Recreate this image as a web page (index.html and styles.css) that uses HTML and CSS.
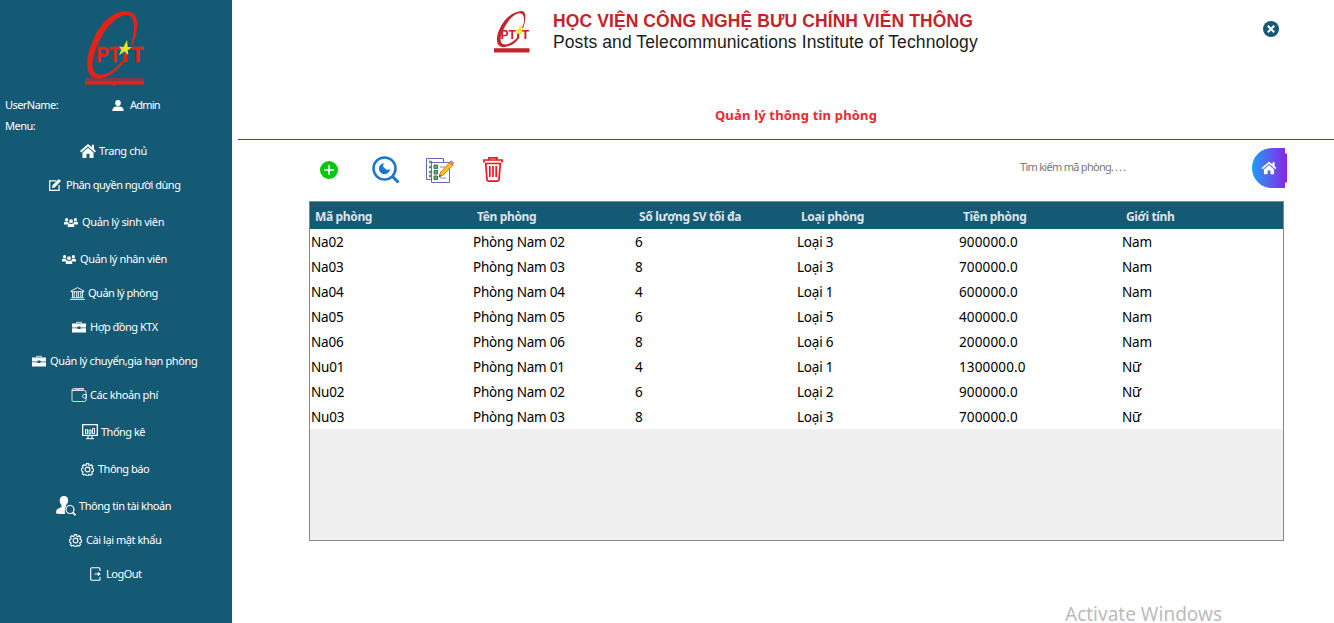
FILE: index.html
```html
<!DOCTYPE html>
<html lang="vi">
<head>
<meta charset="utf-8">
<title>Quản lý thông tin phòng</title>
<link rel="stylesheet" href="styles.css">
</head>
<body>
<svg class="defs" width="0" height="0">
  <defs>
    <symbol id="house" viewBox="0 0 16 14"><path d="M8 0 0 7l1.2 1.4L8 2.5l6.8 5.9L16 7l-2-1.8V.8h-2.200v2.500z"/><path d="M8 3.800 2.500 8.600V14h4V9.700h3V14h4V8.600z"/></symbol>
    <symbol id="edit" viewBox="0 0 12 12"><path d="M7.500 1.900H.7v9.400h9.400V6" fill="none" stroke="currentColor" stroke-width="1.200"/><path d="M3 9 3.600 6.300 9.800 0 12 2 5.700 8.400z"/></symbol>
    <symbol id="group" viewBox="0 0 14 9"><circle cx="2.600" cy="1.700" r="1.600"/><circle cx="11.400" cy="1.700" r="1.600"/><circle cx="7" cy="3.200" r="1.900"/><path d="M0 6.500V5q0-1.200 1.300-1.200H4q.2 1.400 1 2l-.8.700zM14 6.500V5q0-1.200-1.300-1.200H10q-.2 1.400-1 2l.8.700zM3.800 9V7.300q0-1.700 1.700-1.700L7 6.300l1.500-.7q1.700 0 1.700 1.700V9z"/></symbol>
    <symbol id="bank" viewBox="0 0 15 13"><path d="M1 4 7.500.6 14 4v.700H1zM2.500 5v5.500M4.200 5v5.500M6.700 5v5.500M8.400 5v5.500M10.800 5v5.500M12.500 5v5.500M1.500 10.700h12M0 12.400h15" fill="none" stroke="currentColor" stroke-width=".9"/></symbol>
    <symbol id="case" viewBox="0 0 14 12"><path d="M4.500 2.500V1.300h5v1.200" fill="none" stroke="currentColor" stroke-width=".8"/><path d="M0 2.400h14v4H8.500V5.600h-3v.8H0zM0 7.200h5.500V8h3v-.8H14V11.500H0z"/></symbol>
    <symbol id="wallet" viewBox="0 0 16 14"><path d="M1 2.500 12 .7v1.800M1 2.500h12.500q1.500 0 1.500 1.500v8q0 1.500-1.500 1.500h-11Q1 13.500 1 12V2q0-1.400 1.500-1.400H13M15.500 6.500H13q-1.500 0-1.500 1.700T13 10h2.500z" fill="none" stroke="currentColor" stroke-width=".8"/></symbol>
    <symbol id="chart" viewBox="0 0 16 16"><path d="M.7.700h14.600v10.600H.7z" fill="none" stroke="currentColor" stroke-width="1.300"/><path d="M6 11.500v3M10 11.500v3M4 14.700h8M3.500 5.500h2v4h-2zM7 6h2v3.500H7zM10.500 4.500h2v5h-2z" fill="none" stroke="currentColor"/></symbol>
    <symbol id="gear" viewBox="0 0 14 14"><path d="M5.800.7h2.400l.4 1.700 1 .4 1.500-.9 1.500 1.600-.8 1.500.4 1 1.300.5v2.100l-1.500.5-.4 1 .8 1.500-1.500 1.500-1.500-.8-1 .4-.4 1.200H5.900l-.5-1.300-1-.4-1.500.8-1.500-1.500.8-1.500-.4-1L.5 8.400V6.200L1.900 5.800l.4-1-.8-1.500L3 1.800l1.500.9 1-.4z" fill="none" stroke="currentColor" stroke-width="1.200"/><circle cx="7" cy="7" r="2.600" fill="none" stroke="currentColor" stroke-width="1.200"/></symbol>
    <symbol id="find" viewBox="0 0 20 20"><path d="M8 0c3 0 4.300 2 4.200 4.700Q12 7.500 10 9.300v1.400Q8 12.500 9.200 17.700q-4.500.9-9.200-.5 0-4 2.500-4.800l3-1.500V9.300Q3.700 7.500 3.700 4.700 3.700 0 8 0z"/><circle cx="14" cy="13.500" r="4" fill="none" stroke="currentColor" stroke-width="1.200"/><path d="m16.800 16.500 2.700 2.800" stroke="currentColor" stroke-width="1.800"/></symbol>
    <symbol id="exit" viewBox="0 0 11 14"><path d="M10 4V1.700q0-1-1-1H1.700q-1 0-1 1v10.600q0 1 1 1H9q1 0 1-1V10" fill="none" stroke="currentColor" stroke-width="1.100"/><path d="M4.500 6.500h3.300V4.700L10.700 7 7.800 9.300V7.500H4.500z"/></symbol>
    <symbol id="user" viewBox="0 0 12 11"><ellipse cx="6" cy="3" rx="2.800" ry="3"/><path d="M.3 11q0-4.200 4-4.500h3.400q4 .3 4 4.500z"/></symbol>
  </defs>
</svg>
<div class="app">
  <aside class="sidebar">
    <svg class="brand" viewBox="0 0 60 76">
      <path fill="#e2231a" fill-rule="evenodd" d="M41 0C28 0 16 12 9 27 1 44 0 59 6 65c7 6 22 1 33-14l-2.500-1C27 63 15 67 9.500 61 5 54 9 40 16 27 24 11 36 3 43 4c8 2 7 17 3 30l1.500.5C54 19 56 1 41 0z"/>
      <text x="11.300" y="51.200" textLength="12.500" lengthAdjust="spacingAndGlyphs" class="brand-letters">P</text>
      <text x="24" y="51.200" textLength="11.500" lengthAdjust="spacingAndGlyphs" class="brand-letters">T</text>
      <path fill="#e2231a" d="M38 42h4.500v9.200H38z"/>
      <text x="46.500" y="51.200" textLength="12" lengthAdjust="spacingAndGlyphs" class="brand-letters">T</text>
      <path fill="#e8e51a" d="m42 29 .8 7 4.500.3-4.600 3 .6 4.700-4-3.400L34 44.500l2.300-6-2.300-3 4.500.4z"/>
      <path fill="#e2231a" d="M0 67.500h59v1H0zM0 69.500h59v4H31l-2 1.800-2-1.800H0z"/>
    </svg>
    <div class="account">
      <span class="account-label">UserName:</span>
      <svg class="user-icon"><use href="#user"/></svg>
      <span class="account-name">Admin</span>
    </div>
    <div class="menu-label">Menu:</div>
    <nav class="menu">
      <a class="item home"><svg><use href="#house"/></svg><span>Trang chủ</span></a>
      <a class="item roles"><svg><use href="#edit"/></svg><span>Phân quyền người dùng</span></a>
      <a class="item spaced students"><svg><use href="#group"/></svg><span>Quản lý sinh viên</span></a>
      <a class="item spaced staff"><svg><use href="#group"/></svg><span>Quản lý nhân viên</span></a>
      <a class="item rooms"><svg><use href="#bank"/></svg><span>Quản lý phòng</span></a>
      <a class="item contract"><svg><use href="#case"/></svg><span>Hợp đồng KTX</span></a>
      <a class="item transfer"><svg><use href="#case"/></svg><span>Quản lý chuyển,gia hạn phòng</span></a>
      <a class="item fees"><svg><use href="#wallet"/></svg><span>Các khoản phí</span></a>
      <a class="item spaced stats"><svg><use href="#chart"/></svg><span>Thống kê</span></a>
      <a class="item spaced notices"><svg><use href="#gear"/></svg><span>Thông báo</span></a>
      <a class="item spaced profile"><svg><use href="#find"/></svg><span>Thông tin tài khoản</span></a>
      <a class="item password"><svg><use href="#gear"/></svg><span>Cài lại mật khẩu</span></a>
      <a class="item logout"><svg><use href="#exit"/></svg><span>LogOut</span></a>
    </nav>
  </aside>
  <main class="main">
    <header class="header">
      <svg class="mark" viewBox="0 0 36 42">
        <path fill="#c3242a" fill-rule="evenodd" d="M27 0C17 1 8 10 4 22 1 33 5 37 11 36c6-1 11-4 14-9l-1.500-.7C18 33 9 36 7 31 5 25 11 14 17 7c5-5 10-6 12-3 2 4 1 8-1 13l1 .3C32 9 33-.5 27 0zM0 37.300h35.500v4.200H0z"/>
        <text class="mark-letters" x="6.500" y="27.700" textLength="8" lengthAdjust="spacingAndGlyphs">P</text>
        <text class="mark-letters" x="14.500" y="27.700" textLength="7.500" lengthAdjust="spacingAndGlyphs">T</text>
        <path fill="#c3242a" d="M23 22h2.200v5.700H23z"/>
        <text class="mark-letters" x="27.500" y="27.700" textLength="7.800" lengthAdjust="spacingAndGlyphs">T</text>
        <path fill="#ffeb13" d="m26.500 14 .6 4 1.800.5-1.700 1.900.3 3.200-2.200-1.600-3.200 2.200 1.100-4.300-1.200-1.700 2.200.1z"/>
      </svg>
      <div class="names">
        <div class="name-vi">HỌC VIỆN CÔNG NGHỆ BƯU CHÍNH VIỄN THÔNG</div>
        <div class="name-en">Posts and Telecommunications Institute of Technology</div>
      </div>
      <svg class="close" viewBox="0 0 16 16"><circle cx="8" cy="8" r="8" fill="#155a75"/><path d="m4.800 4.800 6.400 6.400M11.200 4.800l-6.400 6.400" stroke="#fff" stroke-width="2"/></svg>
    </header>
    <h1 class="title">Quản lý thông tin phòng</h1>
    <div class="toolbar">
      <svg class="add" viewBox="0 0 18 18"><circle cx="9" cy="9" r="9" fill="#00c90d"/><path d="M9 4v10M4 9h10" stroke="#fff" stroke-width="1.700"/></svg>
      <svg class="view" viewBox="0 0 28 28" fill="none" stroke="#1976d2"><circle cx="12.500" cy="12.500" r="11" stroke-width="2.500"/><path d="m20.500 20.500 6 6" stroke-width="3"/><path d="M12.500 7a5.600 5.600 0 1 0 5.600 5.600 3 3 0 0 1-5-.2 3 3 0 0 1-.6-5.400z" fill="#1976d2" stroke="none"/></svg>
      <svg class="modify" viewBox="0 0 28 26">
        <path d="M.5.500h17v21H.5z" fill="#fff" stroke="#686aa8"/><path d="M3 4h3M3 9h3M3 14h3M3 18h3" stroke="#54966a" stroke-width="2.500"/>
        <path d="M5.500 4.500h18v20h-18z" fill="#fff" stroke="#686aa8"/><path d="M8 7h3.500v3.500H8zM8 12.500h3.500V16H8zM8 18h3.500v3.500H8z" fill="#69a96b" stroke="#397658"/><path d="M14 9h5M14 14h3M14 20h6" stroke="#8c8fb9"/>
        <path d="m13 19 1.500-4.500L24 4l3 3-9.500 10z" fill="#f5be22" stroke="#ad7a20" stroke-width=".8"/><path d="m23.500 4.500 1.800-1.800 2.400 2.500L26.500 7z" fill="#e5838a" stroke="#a45064" stroke-width=".6"/><path d="m13 19 .7-2.200 1.500 1.300z" fill="#333"/>
      </svg>
      <svg class="delete" viewBox="0 0 20 25" fill="none" stroke="#f6131d" stroke-width="1.700"><path d="M1 5.500V3h18v2.500M6 3V.9h8V3M2 6.500h16M2.700 6.500 4 22.500q.1 1.600 1.500 1.600h9q1.400 0 1.500-1.600L17.300 6.500M6.800 9v11M10 9v11M13.200 9v11"/></svg>
      <span class="search">Tìm kiếm mã phòng<span class="dots">....</span></span>
      <svg class="home-button" viewBox="0 0 35 40"><defs><linearGradient id="homeFill"><stop stop-color="#209cf4"/><stop offset="1" stop-color="#8b24e9"/></linearGradient></defs><path fill="url(#homeFill)" d="M20 0h13v5l2 1v28l-2 1v5H20A20 20 0 0 1 20 0z"/><svg x="9" y="13.500" width="16" height="13" viewBox="0 0 16 14" fill="#fff"><use href="#house"/></svg></svg>
    </div>
    <section class="grid">
      <div class="row head"><span>Mã phòng</span><span>Tên phòng</span><span>Số lượng SV tối đa</span><span>Loại phòng</span><span>Tiền phòng</span><span>Giới tính</span></div>
      <div class="row"><span>Na02</span><span>Phòng Nam 02</span><span>6</span><span>Loại 3</span><span class="price">900000.0</span><span>Nam</span></div>
      <div class="row"><span>Na03</span><span>Phòng Nam 03</span><span>8</span><span>Loại 3</span><span class="price">700000.0</span><span>Nam</span></div>
      <div class="row"><span>Na04</span><span>Phòng Nam 04</span><span>4</span><span>Loại 1</span><span class="price">600000.0</span><span>Nam</span></div>
      <div class="row"><span>Na05</span><span>Phòng Nam 05</span><span>6</span><span>Loại 5</span><span class="price">400000.0</span><span>Nam</span></div>
      <div class="row"><span>Na06</span><span>Phòng Nam 06</span><span>8</span><span>Loại 6</span><span class="price">200000.0</span><span>Nam</span></div>
      <div class="row"><span>Nu01</span><span>Phòng Nam 01</span><span>4</span><span>Loại 1</span><span class="price">1300000.0</span><span>Nữ</span></div>
      <div class="row"><span>Nu02</span><span>Phòng Nam 02</span><span>6</span><span>Loại 2</span><span class="price">900000.0</span><span>Nữ</span></div>
      <div class="row"><span>Nu03</span><span>Phòng Nam 03</span><span>8</span><span>Loại 3</span><span class="price">700000.0</span><span>Nữ</span></div>
    </section>
    <footer class="watermark">Activate Windows</footer>
  </main>
</div>
</body>
</html>
```
FILE: styles.css
```css
* { box-sizing: border-box; }
body { margin: 0; background: #fff; font-family: "Noto Sans", "Open Sans", sans-serif; }
svg { display: block; flex: none; }
.defs { display: none; }
.app { display: flex; width: 1334px; height: 623px; }

.sidebar { width: 232px; background: #155a75; color: #fff; fill: #fff; font-size: 11px; line-height: 16px; letter-spacing: -0.38px; white-space: nowrap; }
.brand { width: 60px; height: 76px; margin: 11px 0 0 85px; }
.brand-letters { font: bold 22px "Liberation Sans", sans-serif; fill: #e2231a; stroke: #e2231a; stroke-width: 0.5px; letter-spacing: 0; }
.account { display: flex; align-items: center; height: 16px; margin-top: 10px; padding-left: 5px; }
.account-label { width: 107px; letter-spacing: -0.55px; }
.account-name { letter-spacing: -0.8px; }
.user-icon { width: 12px; height: 11px; margin-right: 6px; }
.menu-label { margin-top: 5px; padding-left: 5px; letter-spacing: -0.5px; }
.item { display: flex; align-items: center; height: 34px; gap: 4px; }
.spaced { margin-top: 3px; }
.home { padding-left: 80px; gap: 3px; }
.home svg { width: 16px; height: 14px; }
.roles { padding-left: 49px; gap: 5px; letter-spacing: -0.5px; }
.roles svg { width: 12px; height: 12px; }
.students { padding-left: 64px; }
.staff { padding-left: 62px; }
.students svg, .staff svg { width: 14px; height: 9px; }
.rooms { padding-left: 70px; gap: 3px; letter-spacing: -0.5px; }
.rooms svg { width: 15px; height: 13px; }
.contract { padding-left: 72px; letter-spacing: -0.5px; }
.transfer { padding-left: 32px; }
.contract svg, .transfer svg { width: 14px; height: 12px; }
.fees { padding-left: 71px; gap: 3px; }
.fees svg { width: 16px; height: 14px; }
.stats { padding-left: 82px; gap: 3px; letter-spacing: -0.5px; }
.stats svg { width: 16px; height: 16px; }
.notices { padding-left: 81px; letter-spacing: -0.5px; }
.password { padding-left: 69px; letter-spacing: -0.45px; }
.notices svg, .password svg { width: 13px; height: 13px; }
.profile { padding-left: 56px; gap: 3px; letter-spacing: -0.45px; }
.profile svg { width: 20px; height: 20px; }
.logout { padding-left: 90px; gap: 5px; letter-spacing: -0.5px; }
.logout svg { width: 11px; height: 14px; }

.main { width: 1102px; }
.header { display: flex; align-items: flex-start; height: 100px; padding: 11px 0 0 262px; }
.mark { width: 36px; height: 42px; }
.mark-letters { font: bold 12.500px "Liberation Sans", sans-serif; fill: #c3242a; }
.names { width: 710px; padding-left: 23px; font-family: "Liberation Sans", Arial, sans-serif; line-height: 21px; letter-spacing: 0.1px; white-space: nowrap; }
.name-vi { color: #c3242a; font-size: 17.500px; font-weight: bold; }
.name-en { color: #1c1c1c; font-size: 17.500px; }
.close { width: 16px; height: 16px; margin: 10px 0 0 23px; }
.title { height: 40px; margin: 0 0 0 6px; padding-top: 5px; border-bottom: 1px solid #155a75; color: #ed2831; font-size: 13px; font-weight: bold; line-height: 20px; letter-spacing: 0.18px; text-align: center; text-indent: 20px; }
.toolbar { display: flex; align-items: flex-start; height: 61px; padding: 8px 0 0 88px; }
.add { width: 18px; height: 18px; margin-top: 13px; }
.view { width: 28px; height: 28px; margin: 8px 0 0 34px; }
.modify { width: 28px; height: 26px; margin: 10px 0 0 26px; }
.delete { width: 20px; height: 25px; margin: 9px 0 0 29px; }
.search { width: 232px; margin: 9px 0 0 517px; color: #777; font-size: 11px; line-height: 20px; letter-spacing: -0.72px; white-space: nowrap; }
.dots { letter-spacing: 1px; }
.home-button { width: 35px; height: 40px; }
.grid { width: 975px; height: 340px; margin-left: 77px; border: 1px solid #828790; background: #f0f0f0; }
.row { display: grid; grid-template-columns: repeat(5, 162px) 163px; height: 25px; padding-left: 1px; background: #fff; color: #000; font-size: 13.500px; line-height: 27px; letter-spacing: -0.2px; }
.row span:last-child { padding-left: 1px; }
.price { letter-spacing: 0.15px; }
.head { height: 27px; padding-left: 5px; background: #155a75; color: #dfe3e6; font-size: 12px; font-weight: bold; line-height: 29px; letter-spacing: -0.35px; }
.watermark { margin: 64px 0 0 833px; color: #bcbcbc; font-size: 19px; line-height: 18px; }
```
